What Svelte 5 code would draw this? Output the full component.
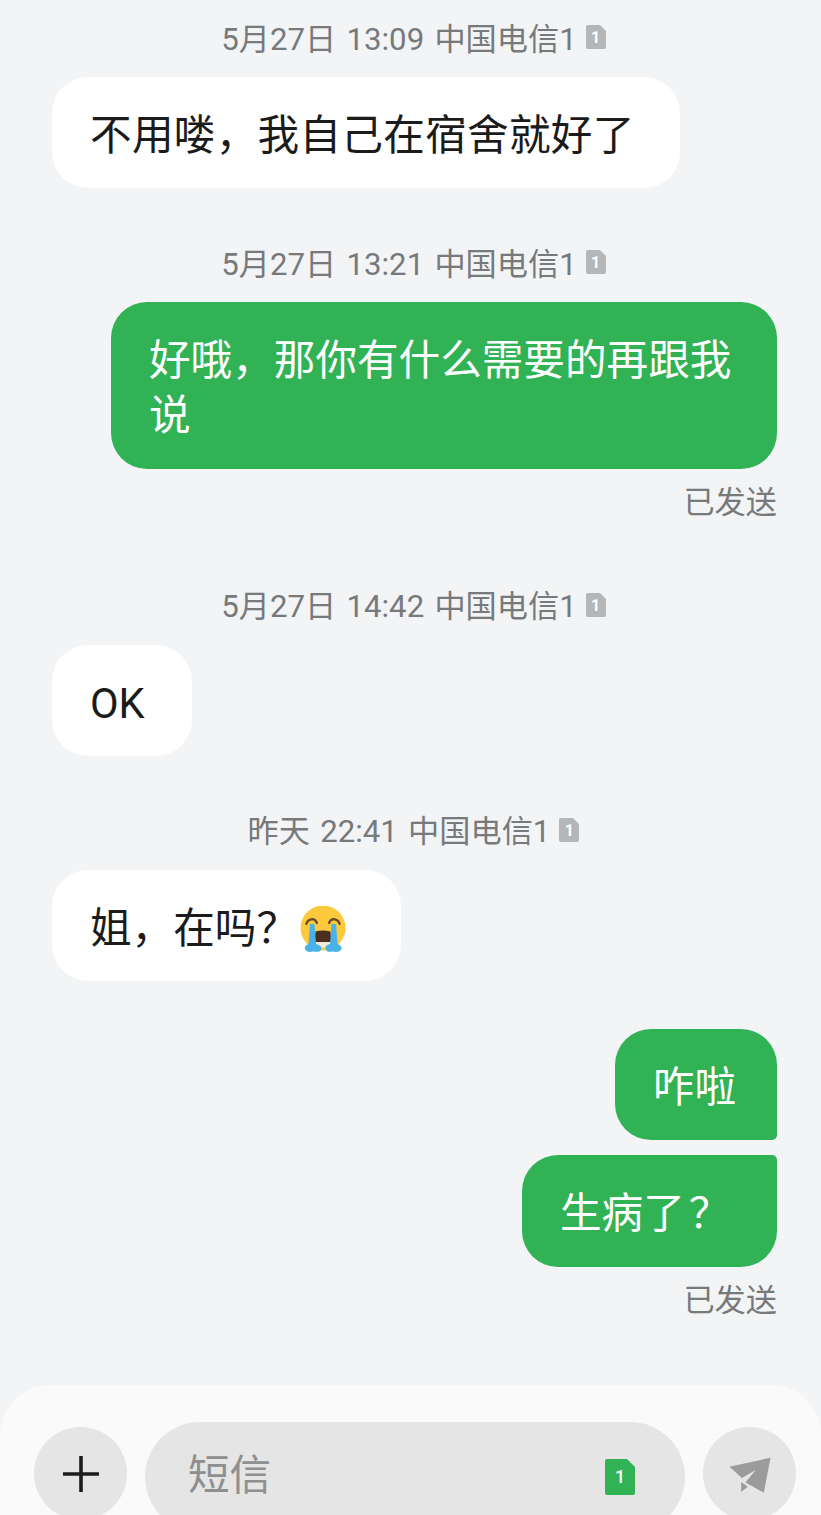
<script>
  // conversation data, rendered top to bottom
  const messages = [
    { time: '5月27日 13:09', text: '不用喽，我自己在宿舍就好了', out: false, wide: true },
    { time: '5月27日 13:21', text: '好哦，那你有什么需要的再跟我说', out: true, sent: true },
    { time: '5月27日 14:42', text: 'OK', out: false },
    { time: '昨天 22:41', text: '姐，在吗？', out: false, emoji: true },
    { text: '咋啦', out: true, tail: true, gap: true },
    { text: '生病了', q: '？', out: true, head: true, sent: true }
  ];
</script>

<div class="screen">
  <div class="thread">
    {#each messages as m}
      {#if m.time}
        <div class="stamp">
          <span class="when">{m.time} 中国电信1</span>
          <span class="sim">
            <svg viewBox="0 0 20 24" width="20" height="24">
              <path d="M2 0H14L20 6V22a2 2 0 0 1-2 2H2a2 2 0 0 1-2-2V2a2 2 0 0 1 2-2Z" fill="#b4b6b8" />
            </svg>
            <span class="simnum">1</span>
          </span>
        </div>
      {/if}
      <div class="row" class:out={m.out} class:gap={m.gap} class:head={m.head}>
        <div class="bubble" class:tail={m.tail} class:head={m.head} class:has-emoji={m.emoji} class:wide={m.wide}>
          <span>{m.text}{#if m.q}<span class="q">{m.q}</span>{/if}</span>
          {#if m.emoji}
            <svg class="emoji" viewBox="0 0 48 48" width="48" height="48">
              <circle cx="24" cy="22" r="22.5" fill="#fcc93c" />
              <path d="M7.3 18C8.5 13.5 15 10.5 18 17M40.7 18C39.5 13.5 33 10.5 30 17" fill="none" stroke="#6b4a2a" stroke-width="2.2" stroke-linecap="round" />
              <path d="M16.5 25.5Q24 23.5 31.5 25.5L33 42H15Z" fill="#4a2f1e" />
              <path d="M16 36H32L33 42H15Z" fill="#f2ead8" />
              <path d="M11 18H15.5L17 38C21 39 23.5 41 22 44C21 46 18 46 14 45.5C11 46.5 7 46 6 43C5.2 40.5 7.5 39 9.5 38Z" fill="#4ab2e8" />
              <path d="M37 18H32.5L31 38C27 39 25.5 41 27 44C28 46 31 46 34 45.5C37 46.5 41.5 46 42.5 43C43.3 40.5 40.5 39 38.5 38Z" fill="#4ab2e8" />
            </svg>
          {/if}
        </div>
      </div>
      {#if m.sent}
        <div class="status">已发送</div>
      {/if}
    {/each}
  </div>

  <div class="composer">
    <button class="round" aria-label="add">
      <svg viewBox="0 0 36 36" width="36" height="36">
        <path d="M18 0V36M0 18H36" stroke="#1c1c1c" stroke-width="3.6" fill="none" />
      </svg>
    </button>
    <div class="field">
      <span class="placeholder">短信</span>
      <span class="card">
        <svg viewBox="0 0 30 36" width="30" height="36">
          <path d="M2 0H22L30 8V34a2 2 0 0 1-2 2H2a2 2 0 0 1-2-2V2a2 2 0 0 1 2-2Z" fill="#30b255" />
        </svg>
        <span class="cardnum">1</span>
      </span>
    </div>
    <button class="round" aria-label="send">
      <svg viewBox="0 0 44 38" width="44" height="38">
        <path d="M42.5 2.7 35.8 37.7 17.5 27.5 27.5 15 14 23 1.5 11.7Z" fill="#9b9b9b" />
        <path d="M13.2 27V37L19.8 31.7Z" fill="#9b9b9b" />
      </svg>
    </button>
  </div>
</div>

<style>
  :global(body) {
    background: #f2f4f6;
  }
  .screen {
    width: 821px;
    height: 1515px;
    overflow: hidden;
    display: flex;
    flex-direction: column;
    font-family: Roboto, "Noto Sans CJK SC", sans-serif;
    background: #f2f4f6;
  }
  .thread {
    flex: 1;
    padding: 17px 44px 0 52px;
    display: flex;
    flex-direction: column;
  }
  .stamp {
    display: flex;
    justify-content: center;
    align-items: center;
    gap: 9px;
    height: 40px;
    margin-bottom: 20px;
    font-size: 31.2px;
    word-spacing: 2.5px;
    color: #77797b;
  }
  .stamp:not(:first-child) {
    margin-top: 54px;
  }
  .when {
    margin-top: -2px;
  }
  .sim {
    position: relative;
    display: flex;
    margin-right: 2px;
  }
  .simnum {
    position: absolute;
    inset: 0;
    text-align: center;
    font-size: 16px;
    font-weight: 700;
    line-height: 25px;
    color: #fff;
  }
  .row {
    display: flex;
  }
  .row.out {
    justify-content: flex-end;
  }
  .row.gap {
    margin-top: 48px;
  }
  .row.head {
    margin-top: 15px;
  }
  .bubble {
    box-sizing: border-box;
    min-width: 140px;
    max-width: 666px;
    padding: 31px 41px 25.3px 38px;
    border-radius: 36px;
    background: #fff;
    font-size: 41.6px;
    line-height: 55px;
    color: #1b1b1b;
    display: flex;
    align-items: center;
  }
  .out .bubble {
    background: #30b255;
    color: #fff;
  }
  .bubble.tail {
    border-bottom-right-radius: 5px;
  }
  .bubble.head {
    border-top-right-radius: 5px;
  }
  .bubble.wide {
    padding-right: 45px;
    letter-spacing: 0.3px;
  }
  .bubble.has-emoji {
    padding-right: 54px;
  }
  .q {
    padding: 0 5.6px 0 4px;
  }
  .emoji {
    flex: none;
    margin: 4px 0 0 1px;
  }
  .status {
    align-self: flex-end;
    height: 40px;
    line-height: 40px;
    margin-top: 14px;
    margin-bottom: 8px;
    font-size: 31.2px;
    color: #77797b;
  }
  .composer {
    height: 130px;
    flex: none;
    box-sizing: border-box;
    background: #fafafa;
    border-radius: 50px 50px 0 0;
    padding: 37px 25px 0 34px;
    display: flex;
    align-items: flex-start;
    gap: 18px;
  }
  .round {
    width: 93px;
    height: 93px;
    margin-top: 5px;
    border: none;
    border-radius: 50%;
    background: #e5e5e5;
    display: flex;
    align-items: center;
    justify-content: center;
    flex: none;
    padding: 0;
  }
  .field {
    flex: 1;
    height: 110px;
    border-radius: 55px;
    background: #e5e5e5;
    display: flex;
    align-items: center;
    justify-content: space-between;
    padding: 0 50px 0 43px;
  }
  .placeholder {
    font-size: 41.6px;
    color: #8f8f8f;
    margin-top: -10px;
  }
  .card {
    position: relative;
    display: flex;
  }
  .cardnum {
    position: absolute;
    inset: 0;
    text-align: center;
    font-size: 18px;
    font-weight: 500;
    line-height: 36px;
    color: #fff;
  }
</style>
